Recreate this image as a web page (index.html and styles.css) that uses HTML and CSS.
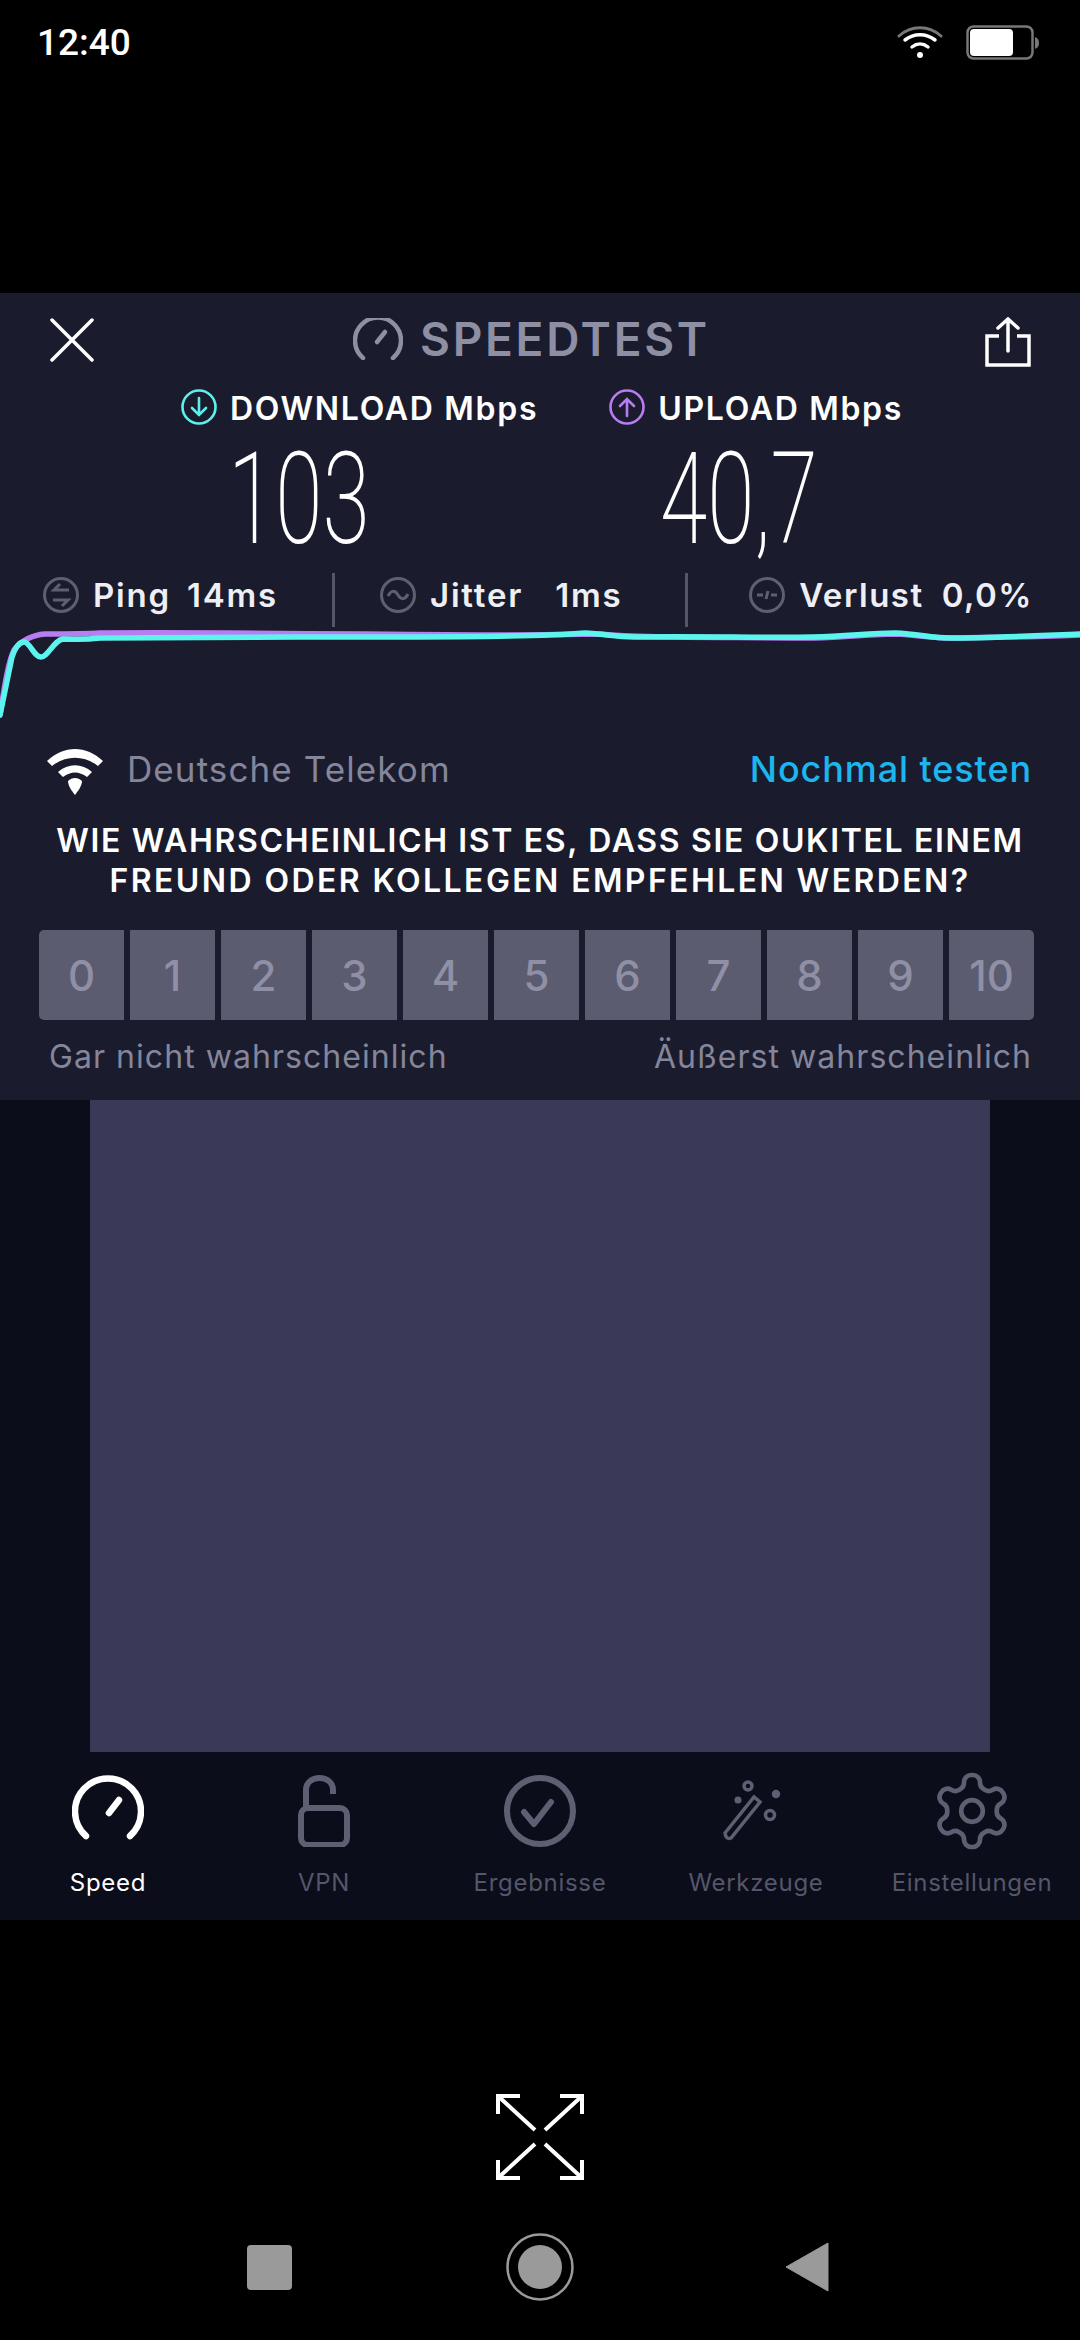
FILE: index.html
```html
<!DOCTYPE html>
<html lang="de">
<head>
<meta charset="UTF-8">
<meta name="viewport" content="width=device-width, initial-scale=1.0">
<title>Speedtest</title>
<link rel="stylesheet" href="styles.css">
</head>
<body>

<div class="status-bar">
  <span class="clock">12:40</span>
  <div class="status-icons">
    <svg class="wifi-small" width="46" height="34" viewBox="0 0 46 34" fill="none" stroke-linecap="round">
      <path d="M2 11C14 0 32 0 44 11" stroke="#77777c" stroke-width="3"/>
      <path d="M8 15C17 8 29 8 38 15" stroke="#fff" stroke-width="3.5"/>
      <path d="M15 22C20 18 26 18 31 22" stroke="#fff" stroke-width="3.5"/>
      <circle cx="23" cy="30" r="3" fill="#fff"/>
    </svg>
    <svg width="74" height="36" viewBox="0 0 74 36" fill="none">
      <rect x="1.5" y="1.5" width="65" height="32" rx="6" stroke="#77777c" stroke-width="2.5"/>
      <rect x="4" y="4" width="43" height="27" rx="4" fill="#fff"/>
      <path d="M69 12C72 13 73 15 73 18C73 21 72 23 69 24Z" fill="#77777c"/>
    </svg>
  </div>
</div>

<div class="panel">
  <div class="top-bar">
    <svg width="44" height="44" viewBox="0 0 44 44" fill="none" stroke="#fff" stroke-width="3.5" stroke-linecap="round"><path d="M2 2L42 42M42 2L2 42"/></svg>
    <div class="brand">
      <svg width="50" height="42" viewBox="0 0 50 42" fill="none" stroke="#8e8fa3" stroke-width="4.5" stroke-linecap="round"><path d="M10 40A23 23 0 1 1 40 40"/><path d="M32 14L24 24"/></svg>
      <span>SPEEDTEST</span>
    </div>
    <svg class="share" width="46" height="50" viewBox="0 0 46 50" fill="none" stroke="#fff" stroke-width="3.5"><path d="M23 34V2M13 11L23 2L33 11" stroke-linecap="round"/><path d="M14 19H2V48H44V19H32"/></svg>
  </div>

  <div class="speed-labels">
    <div class="speed-label">
      <svg width="36" height="36" viewBox="0 0 36 36" fill="none" stroke="#5cf0ea" stroke-width="2.6" stroke-linecap="round"><circle cx="18" cy="18" r="16.5"/><path d="M18 9V26M11 19L18 26L25 19"/></svg>
      <span>DOWNLOAD Mbps</span>
    </div>
    <div class="speed-label">
      <svg width="36" height="36" viewBox="0 0 36 36" fill="none" stroke="#b77cf0" stroke-width="2.6" stroke-linecap="round"><circle cx="18" cy="18" r="16.5"/><path d="M18 27V10M11 17L18 10L25 17"/></svg>
      <span>UPLOAD Mbps</span>
    </div>
  </div>

  <div class="speed-values">
    <span class="value">103</span>
    <span class="value">40,7</span>
  </div>

  <div class="stats">
    <div class="stat stat-ping">
      <svg width="36" height="36" viewBox="0 0 36 36" fill="none" stroke="#5e5f72" stroke-width="3"><circle cx="18" cy="18" r="16.5"/><path d="M26 13H11L17 7M10 23H25L19 29"/></svg>
      <span class="stat-name">Ping</span><span>14ms</span>
    </div>
    <div class="stat stat-jitter">
      <svg width="36" height="36" viewBox="0 0 36 36" fill="none" stroke="#5e5f72" stroke-width="3"><circle cx="18" cy="18" r="16.5"/><path d="M8 19C11 13 15 13 18 18C21 23 25 23 28 17"/></svg>
      <span class="stat-name">Jitter</span><span>1ms</span>
    </div>
    <div class="stat stat-loss">
      <svg width="36" height="36" viewBox="0 0 36 36" fill="none" stroke="#5e5f72" stroke-width="3"><circle cx="18" cy="18" r="16.5"/><path d="M8 18H14M17 22L19 14M22 18H28"/></svg>
      <span class="stat-name">Verlust</span><span>0,0%</span>
    </div>
  </div>

  <svg class="chart" width="1080" height="90" viewBox="0 630 1080 90" fill="none" stroke-width="5.5" stroke-linejoin="round" stroke-linecap="round">
    <path stroke="#b87df0" d="M0 715C4 690 8 662 14 650C22 640 32 635 45 634C70 634 85 634 100 633C250 632 400 635 500 635C560 635 585 634 600 634C640 638 700 637 813 638C850 637 870 634 895 634C920 635 930 638 950 638C990 637 1040 637 1080 635"/>
    <path stroke="#5cf5ee" d="M0 715L12 657C16 645 20 642 24 642C30 642 34 657 41 657C48 657 54 640 63 639C75 639 82 640 100 638C180 637 300 637 400 637C500 637 560 635 585 633C605 634 615 637 634 637C700 636 760 638 813 637C850 636 870 633 895 633C920 634 930 638 950 638C990 638 1030 636 1080 634"/>
  </svg>

  <div class="carrier-row">
    <svg width="58" height="46" viewBox="0 0 58 46" fill="#fff"><path d="M1 12C18 -4 40 -4 57 12L52 17C38 6 20 6 6 17Z"/><path d="M12 23C22 14 36 14 46 23L41 28C33 22 25 22 17 28Z"/><path d="M22 32C26 28 32 28 36 32C36 37 32 42 29 46C26 42 22 37 22 32Z"/></svg>
    <span class="carrier">Deutsche Telekom</span>
    <span class="retry">Nochmal testen</span>
  </div>

  <p class="question">WIE WAHRSCHEINLICH IST ES, DASS SIE OUKITEL EINEM<br><span class="question-end">FREUND ODER KOLLEGEN EMPFEHLEN WERDEN?</span></p>

  <div class="scale">
    <span>0</span><span>1</span><span>2</span><span>3</span><span>4</span><span>5</span><span>6</span><span>7</span><span>8</span><span>9</span><span>10</span>
  </div>

  <div class="scale-labels">
    <span>Gar nicht wahrscheinlich</span>
    <span>Äußerst wahrscheinlich</span>
  </div>
</div>

<div class="ad-area">
  <div class="ad"></div>
</div>

<div class="tabs">
  <div class="tab active">
    <svg width="72" height="72" viewBox="0 0 72 72" fill="none" stroke="#fff" stroke-width="6.5" stroke-linecap="round"><path d="M14 61A33 33 0 1 1 58 61"/><path d="M47 25L37 38"/></svg>
    <span>Speed</span>
  </div>
  <div class="tab">
    <svg width="72" height="72" viewBox="0 0 72 72" fill="none" stroke="#5e5f72" stroke-width="6"><rect x="13" y="33" width="46" height="37" rx="7"/><path d="M18 33V15C18 -1 45 -1 45 15V19"/></svg>
    <span>VPN</span>
  </div>
  <div class="tab">
    <svg width="72" height="72" viewBox="0 0 72 72" fill="none" stroke="#5e5f72" stroke-width="6" stroke-linecap="round" stroke-linejoin="round"><circle cx="36" cy="36" r="33"/><path d="M20 37L30 49L47 27"/></svg>
    <span>Ergebnisse</span>
  </div>
  <div class="tab">
    <svg width="72" height="72" viewBox="0 0 72 72" fill="none" stroke="#5e5f72" stroke-width="3.5"><path d="M5 58L34 22L40 27L11 63Q6 65 5 58Z"/><circle cx="28" cy="11" r="4"/><circle cx="56" cy="19" r="2.5" fill="#5e5f72"/><circle cx="18" cy="25" r="1.8" fill="#5e5f72"/><circle cx="50" cy="40" r="4.5"/></svg>
    <span>Werkzeuge</span>
  </div>
  <div class="tab">
    <svg width="72" height="72" viewBox="2 2 20 20" fill="none" stroke="#5e5f72" stroke-width="1.3" overflow="visible"><path d="M12.22 2h-.44a2 2 0 0 0-2 2v.18a2 2 0 0 1-1 1.73l-.43.25a2 2 0 0 1-2 0l-.15-.08a2 2 0 0 0-2.73.73l-.22.38a2 2 0 0 0 .73 2.73l.15.1a2 2 0 0 1 1 1.72v.51a2 2 0 0 1-1 1.74l-.15.09a2 2 0 0 0-.73 2.73l.22.38a2 2 0 0 0 2.73.73l.15-.08a2 2 0 0 1 2 0l.43.25a2 2 0 0 1 1 1.73V20a2 2 0 0 0 2 2h.44a2 2 0 0 0 2-2v-.18a2 2 0 0 1 1-1.73l.43-.25a2 2 0 0 1 2 0l.15.08a2 2 0 0 0 2.73-.73l.22-.39a2 2 0 0 0-.73-2.73l-.15-.08a2 2 0 0 1-1-1.74v-.5a2 2 0 0 1 1-1.74l.15-.09a2 2 0 0 0 .73-2.73l-.22-.38a2 2 0 0 0-2.73-.73l-.15.08a2 2 0 0 1-2 0l-.43-.25a2 2 0 0 1-1-1.73V4a2 2 0 0 0-2-2z"/><circle cx="12" cy="12" r="3"/></svg>
    <span>Einstellungen</span>
  </div>
</div>

<div class="fullscreen">
  <svg width="88" height="86" viewBox="0 0 88 86" fill="none" stroke="#fff" stroke-width="4"><path d="M2 20V2H24M2 2L39 36M86 20V2H64M86 2L49 36M2 66V84H24M2 84L39 50M86 66V84H64M86 84L49 50"/></svg>
</div>

<div class="nav-bar">
  <span class="nav-square"></span>
  <svg width="68" height="68" viewBox="0 0 68 68"><circle cx="34" cy="34" r="32.5" fill="none" stroke="#9a9a9a" stroke-width="2.5"/><circle cx="34" cy="34" r="22" fill="#9a9a9a"/></svg>
  <svg width="44" height="50" viewBox="0 0 44 50"><path d="M1 25L43 1V49Z" fill="#9a9a9a" stroke="#9a9a9a" stroke-width="1" stroke-linejoin="round"/></svg>
</div>

</body>
</html>
```

FILE: styles.css
```css
body {
  margin: 0;
  width: 1080px;
  height: 2340px;
  overflow: hidden;
  background: #000;
  color: #fff;
  font-family: Inter, "Noto Sans", sans-serif;
}
svg {
  display: block;
  flex: none;
}
.status-bar {
  height: 293px;
  box-sizing: border-box;
  padding: 25px 40px 0 37px;
  display: flex;
  justify-content: space-between;
  align-items: flex-start;
}
.clock {
  font-family: Roboto, sans-serif;
  font-size: 37px;
  font-weight: 500;
  line-height: 36px;
}
.status-icons {
  display: flex;
  gap: 23px;
}
.panel {
  height: 807px;
  background: #1a1c2e;
}
.top-bar {
  height: 92px;
  box-sizing: border-box;
  padding: 25px 49px 0 50px;
  display: flex;
  justify-content: space-between;
  align-items: flex-start;
}
.share {
  margin-top: -1px;
}
.brand {
  display: flex;
  align-items: center;
  gap: 17px;
  margin-right: 16px;
  margin-top: -1px;
  color: #8e8fa3;
  font-size: 46px;
  font-weight: 600;
  line-height: 44px;
  letter-spacing: 2.7px;
}
.speed-labels {
  display: flex;
  justify-content: center;
  gap: 71px;
  height: 60px;
  padding: 4px 0 0 4px;
  box-sizing: border-box;
}
.speed-label {
  display: flex;
  align-items: center;
  gap: 13px;
  height: 36px;
  font-size: 32px;
  font-weight: 600;
  letter-spacing: 1.7px;
}
.speed-label span {
  margin-top: 3px;
}
.speed-values {
  height: 128px;
  padding-left: 228px;
  display: grid;
  grid-template-columns: 432px 154px;
}
.value {
  display: block;
  margin-top: -11px;
  font-family: Roboto, sans-serif;
  font-weight: 200;
  font-size: 128px;
  line-height: 130px;
  white-space: nowrap;
  transform-origin: left top;
  transform: scaleX(0.67);
}
.stats {
  height: 54px;
  display: flex;
  font-size: 33px;
  font-weight: 600;
  letter-spacing: 1.8px;
  color: #eeeef5;
}
.stat {
  height: 54px;
  box-sizing: border-box;
  display: flex;
  align-items: center;
  gap: 16px;
  padding-bottom: 10px;
}
.stat svg {
  margin-right: -2px;
}
.stat-ping {
  width: 335px;
  padding-left: 43px;
  border-right: 3px solid #55566a;
}
.stat-jitter {
  width: 353px;
  padding-left: 45px;
  gap: 32px;
  border-right: 3px solid #55566a;
}
.stat-jitter svg {
  margin-right: -18px;
}
.stat-loss {
  flex: 1;
  padding-right: 47px;
  gap: 18px;
  letter-spacing: 1.5px;
  justify-content: flex-end;
}
.stat-loss svg {
  margin-right: -4px;
}
.chart {
  margin-top: 3px;
}
.carrier-row {
  height: 60px;
  margin-top: 19px;
  padding: 0 48px 0 46px;
  display: flex;
  align-items: center;
  font-size: 35px;
  letter-spacing: 1.1px;
}
.carrier-row svg {
  margin-top: 6px;
}
.carrier {
  flex: 1;
  margin-left: 23px;
  color: #85869b;
}
.retry {
  color: #1cb5ee;
  font-size: 36px;
  font-weight: 500;
  letter-spacing: 0.9px;
}
.question {
  margin: 0;
  padding-top: 22px;
  height: 109px;
  text-align: center;
  font-size: 32px;
  font-weight: 600;
  line-height: 40px;
  letter-spacing: 1.65px;
}
.question-end {
  letter-spacing: 2.4px;
}
.scale {
  margin: 0 46px 0 39px;
  height: 90px;
  display: grid;
  grid-template-columns: repeat(11, 1fr);
  gap: 6px;
}
.scale span {
  display: flex;
  align-items: center;
  justify-content: center;
  background: #5b5c70;
  color: #8f90a5;
  font-size: 42px;
  font-weight: 500;
}
.scale span:first-child {
  border-radius: 5px 0 0 5px;
}
.scale span:last-child {
  border-radius: 0 5px 5px 0;
}
.scale-labels {
  display: flex;
  justify-content: space-between;
  padding: 17px 48px 0 49px;
  font-size: 32px;
  line-height: 40px;
  letter-spacing: 1.05px;
  color: #85869b;
}
.ad-area {
  height: 652px;
  background: #0b0d1a;
  display: flex;
  justify-content: center;
}
.ad {
  width: 900px;
  background: #3a3a58;
}
.tabs {
  height: 168px;
  box-sizing: border-box;
  padding-top: 23px;
  background: #0b0d1a;
  display: grid;
  grid-template-columns: repeat(5, 216px);
}
.tab {
  display: flex;
  flex-direction: column;
  align-items: center;
  gap: 21px;
  color: #55566a;
  font-size: 24px;
  line-height: 30px;
  letter-spacing: 0.7px;
}
.tab.active {
  color: #fff;
}
.fullscreen {
  padding-top: 174px;
  height: 139px;
  display: flex;
  justify-content: center;
}
.nav-bar {
  display: flex;
  align-items: center;
  gap: 211px;
  margin-left: 247px;
}
.nav-bar svg:first-of-type {
  margin-left: 3px;
}
.nav-square {
  width: 45px;
  height: 45px;
  border-radius: 4px;
  background: #9a9a9a;
}
```
